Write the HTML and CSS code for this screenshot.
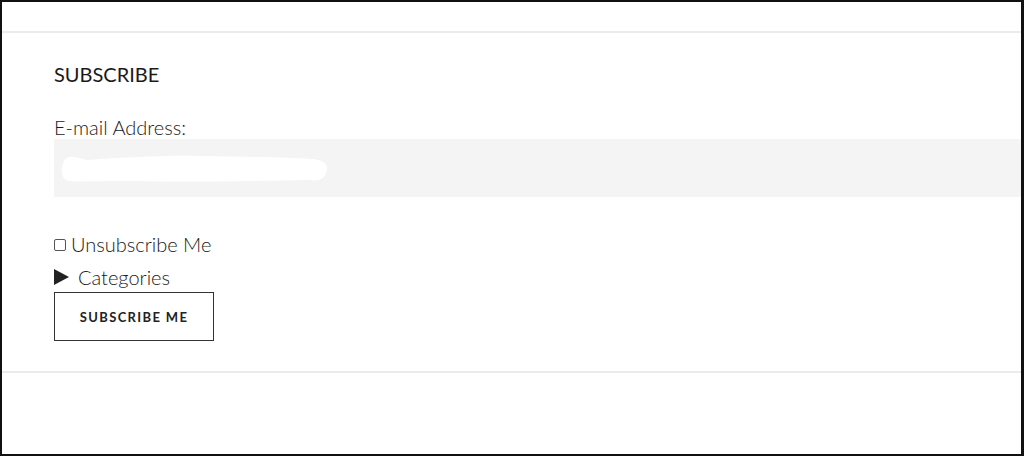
FILE: index.html
```html
<!DOCTYPE html>
<html lang="en">
<head>
  <meta charset="UTF-8" />
  <title>Subscribe</title>
  <link rel="stylesheet" href="styles.css">
</head>
<body>

  <div class="frame">
    <!-- Top strip -->
    <div class="topbar"></div>

    <!-- Subscribe widget -->
    <div class="widget">
      <h3 class="widget-title">SUBSCRIBE</h3>

      <label class="field-label">E-mail Address:</label>
      <div class="email-field">
        <svg width="268" height="30" viewBox="0 0 268 30">
          <path d="M8 3 C14 2 20 5 26 6 C60 4 100 1 140 2 C190 3 230 3 252 5 C262 6 267 10 266 16 C265 24 258 28 250 26 C200 27 120 28 60 27 C30 27 14 28 8 27 C2 26 0 20 1 14 C2 8 4 4 8 3 Z" fill="#ffffff"/>
        </svg>
      </div>

      <div class="check-row">
        <span class="checkbox"></span>
        <span>Unsubscribe Me</span>
      </div>

      <div class="categories">
        <span class="arrow"></span>
        <span>Categories</span>
      </div>

      <button class="subscribe-btn">SUBSCRIBE ME</button>
    </div>

    <!-- Bottom strip -->
    <div class="bottom"></div>
  </div>

</body>
</html>
```

FILE: styles.css
```css
body {
  margin: 0;
  font-family: Lato, "Open Sans", sans-serif;
  background: #ffffff;
  color: #1a1a1a;
}

.frame {
  height: 456px;
  box-sizing: border-box;
  border: 2px solid #111;
  border-right-width: 3px;
  overflow: hidden;
}

/* Top strip */
.topbar {
  height: 29px;
  border-bottom: 2px solid #ebebeb;
}

/* Widget */
.widget {
  height: 340px;
  box-sizing: border-box;
  padding: 29px 0 0 52px;
  border-bottom: 2px solid #ebebeb;
}

.widget-title {
  margin: 0 0 29px;
  font-size: 20px;
  font-weight: 400;
  line-height: 1.2;
}

.field-label {
  display: block;
  font-size: 20px;
  font-weight: 300;
  line-height: 1.2;
}

.email-field {
  height: 58px;
  box-sizing: border-box;
  background: #f4f4f4;
  padding: 15px 0 0 7px;
}

.email-field svg {
  display: block;
}

.check-row {
  margin-top: 35px;
  display: flex;
  align-items: center;
  font-size: 20px;
  font-weight: 300;
  line-height: 1.2;
}

.checkbox {
  width: 10px;
  height: 10px;
  border: 1px solid #555;
  border-radius: 2px;
  margin: 2px 5px 0 0;
}

.categories {
  margin-top: 9px;
  display: flex;
  align-items: center;
  font-size: 20px;
  font-weight: 300;
  line-height: 1.2;
}

.arrow {
  width: 0;
  height: 0;
  border-left: 15px solid #222;
  border-top: 8px solid transparent;
  border-bottom: 8px solid transparent;
  margin-right: 9px;
}

.subscribe-btn {
  display: block;
  margin-top: 3px;
  width: 160px;
  height: 49px;
  background: #ffffff;
  border: 1px solid #333;
  font-family: Lato, sans-serif;
  font-weight: 700;
  font-size: 13px;
  letter-spacing: 1.35px;
  color: #222;
  padding: 0;
}

.bottom {
  height: 80px;
}
```
